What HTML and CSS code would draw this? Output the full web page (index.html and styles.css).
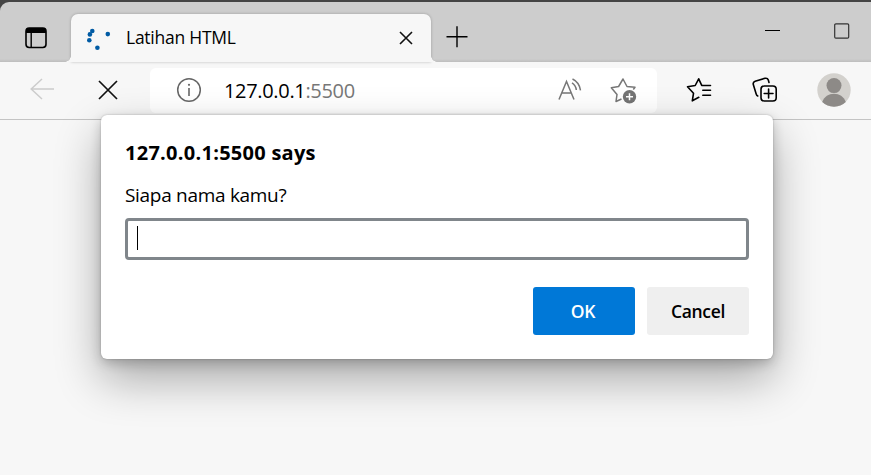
FILE: index.html
```html
<!DOCTYPE html>
<html lang="id">
<head>
<meta charset="utf-8">
<title>Latihan HTML</title>
<link rel="stylesheet" href="styles.css">
</head>
<body>
<div class="window">
  <header class="titlebar">
    <svg class="tab-actions" width="22" height="22" viewBox="0 0 22 22"><rect x="1" y="1" width="20" height="19.5" rx="3.2" fill="none" stroke="#000" stroke-width="1.6"/><path d="M1 6V4a3 3 0 0 1 3-3h14a3 3 0 0 1 3 3v2z"/><path d="M6.2 6v14" stroke="#000" stroke-width="1.4"/></svg>
    <div class="tab">
      <svg class="spinner" width="26" height="24" viewBox="0 0 26 24" fill="#005ba4"><circle cx="6.3" cy="4" r="2.3"/><circle cx="3.9" cy="7.4" r="2.3"/><circle cx="3.3" cy="13.2" r="2.3"/><circle cx="21.8" cy="7.1" r="2.3"/><circle cx="11.4" cy="20.8" r="2.3"/></svg>
      <span class="tab-title">Latihan HTML</span>
      <svg class="tab-close" width="14" height="14" viewBox="0 0 14 14" stroke="#111" stroke-width="1.6"><path d="M1 1l12 12M13 1L1 13"/></svg>
    </div>
    <svg class="new-tab" width="22" height="22" viewBox="0 0 22 22" stroke="#000" stroke-width="1.4"><path d="M.5 10.7h21M11 .3v21"/></svg>
    <svg class="minimize" width="15" height="16" viewBox="0 0 15 16"><path d="M0 7.5h15" stroke="#000"/></svg>
    <svg class="maximize" width="16" height="16" viewBox="0 0 16 16"><rect x=".7" y=".8" width="14" height="14.4" rx="1.2" fill="none" stroke="#333" stroke-width="1.2"/></svg>
  </header>
  <nav class="toolbar">
    <svg class="back" width="25" height="22" viewBox="0 0 25 22" fill="none" stroke="#ccc" stroke-width="1.5"><path d="M12 1L1.2 11 12 21M1.2 11H24"/></svg>
    <svg class="stop" width="20" height="20" viewBox="0 0 20 20" stroke="#111" stroke-width="1.7"><path d="M1 1l18 18M19 1L1 19"/></svg>
    <div class="address">
      <svg class="info" width="26" height="26" viewBox="0 0 26 26"><circle cx="13" cy="13" r="11.3" fill="none" stroke="#666" stroke-width="1.5"/><path d="M13 11v8" stroke="#666" stroke-width="1.6"/><circle cx="13" cy="7.8" r="1.1" fill="#666"/></svg>
      <span class="url">127.0.0.1<span class="port">:5500</span></span>
      <svg class="read" width="25" height="23" viewBox="0 0 25 23" fill="none" stroke="#777" stroke-width="1.5"><path d="M1 21.5L8.5 3.5 16 21.5M3.8 15h9.4M14 4.8q3.8 2.2 4.3 7.2M14.5 1q6.8 3.3 8 11.3"/></svg>
      <svg class="favorite" width="28" height="28" viewBox="0 0 28 28"><path d="M11.5 22L6 24.5l1-7L1.3 10.7l7.3-1.2L13 2l4 7.5 8 .8-1.7 2.2" fill="none" stroke="#777" stroke-width="1.5" stroke-linejoin="round"/><circle cx="19.5" cy="19.8" r="6.7" fill="#747474"/><path d="M16 19.8h7M19.5 16.3v7" stroke="#fff" stroke-width="1.5"/></svg>
    </div>
    <svg class="favorites" width="26" height="26" viewBox="0 0 26 26" fill="none" stroke="#000" stroke-width="1.6" stroke-linecap="round" stroke-linejoin="round"><path d="M12.8 20.3L6.3 23.8l1.2-7.5L1.5 9.8 9.2 8.5 12.7 1.8l3 6.5M16.5 8.5h8M16.8 13.3h7.7M16.8 18.2h7.7"/></svg>
    <svg class="collections" width="26" height="26" viewBox="0 0 26 26" fill="none" stroke="#000" stroke-width="1.6" stroke-linecap="round" stroke-linejoin="round"><path d="M5.7 19C4.8 18.5 4.4 17.7 4.1 16.7L1.3 7.6Q.7 5 3.1 4.2L13 1.3Q15.6.8 16.3 3l.7 2.5"/><rect x="9" y="9" width="15.2" height="15" rx="3.3"/><path d="M12.2 16.5h8.8M16.6 12.1v8.8"/></svg>
    <svg class="profile" width="34" height="34" viewBox="0 0 34 34"><circle cx="17" cy="17" r="16.7" fill="#d3d1cd"/><circle cx="17" cy="12.6" r="7.5" fill="#8d8a87"/><path d="M5.2 29C7.5 23.5 11.5 20.8 17 20.8S26.5 23.5 28.8 29C22.5 35.2 11.5 35.2 5.2 29z" fill="#8d8a87"/></svg>
  </nav>
  <main class="page">
    <section class="dialog">
      <h1 class="origin">127.0.0.1:5500 says</h1>
      <p class="message">Siapa nama kamu?</p>
      <div class="field"><span class="caret"></span></div>
      <div class="actions"><button class="button primary">OK</button><button class="button">Cancel</button></div>
    </section>
  </main>
</div>
</body>
</html>
```
FILE: styles.css
```css
* { box-sizing: border-box; }
body { margin: 0; background: #3b3b3b; font-family: "Open Sans", "Noto Sans", sans-serif; color: #000; }
svg { display: block; flex: none; }
.window { width: 871px; height: 475px; border-top: 2px solid #444; background: #444; overflow: hidden; }
.titlebar { height: 60px; display: flex; align-items: flex-start; background: linear-gradient(#cdcdcd 57px, #bdbdbd 60px); border-top-left-radius: 9px; }
.tab-actions { margin: 25px 0 0 25px; }
.tab { position: relative; width: 360px; height: 48px; margin: 12px 0 0 24px; padding-left: 15px; display: flex; background: #f7f7f7; border-radius: 7px 7px 0 0; box-shadow: 0 0 3px rgba(0,0,0,.25); }
.tab::before, .tab::after { content: ""; position: absolute; bottom: 0; width: 6px; height: 6px; }
.tab::before { left: -6px; background: radial-gradient(circle at 0 0, transparent 5.5px, #f7f7f7 6px); }
.tab::after { right: -6px; background: radial-gradient(circle at 100% 0, transparent 5.5px, #f7f7f7 6px); }
.spinner { margin-top: 13px; }
.tab-title { width: 273px; margin: 10px 0 0 14px; font-size: 17.5px; line-height: 26px; letter-spacing: -.25px; white-space: nowrap; }
.tab-close { margin-top: 17px; }
.new-tab { margin: 24px 0 0 15px; }
.minimize { margin: 21px 0 0 297px; }
.maximize { margin: 21px 0 0 54px; }
.toolbar { height: 58px; display: flex; align-items: flex-start; background: #f7f7f7; border-bottom: 1px solid #c4c4c4; }
.back { margin: 16px 0 0 30px; }
.stop { margin: 18px 0 0 43px; }
.address { width: 507px; height: 45px; margin: 6px 0 0 32px; padding-left: 26px; display: flex; background: #fff; border-radius: 6px; }
.info { margin-top: 9px; }
.url { width: 334px; margin: 9px 0 0 22px; font-size: 20px; line-height: 27px; letter-spacing: -.33px; white-space: nowrap; }
.port { color: #777; }
.read { margin-top: 10px; }
.favorite { margin: 9px 0 0 27px; }
.favorites { margin: 15px 0 0 29px; }
.collections { margin: 15px 0 0 40px; }
.profile { margin: 11px 0 0 39px; }
.page { height: 355px; background: #f7f7f7; }
.dialog { position: relative; top: -5px; width: 672px; height: 244px; margin-left: 101px; padding: 24px; background: #fff; border-radius: 6px; box-shadow: 0 0 2px rgba(0,0,0,.25), 0 4px 12px rgba(0,0,0,.2), 0 20px 46px rgba(0,0,0,.32); }
.origin { height: 28px; margin: 0; font-size: 20px; line-height: 28px; font-weight: 700; letter-spacing: .27px; white-space: nowrap; }
.message { height: 28px; margin: 14px 0 9px; font-size: 19px; line-height: 28px; letter-spacing: -.3px; white-space: nowrap; }
.field { height: 42px; padding: 5px 9px; border: 3px solid #80868b; border-radius: 4px; }
.caret { display: block; width: 1px; height: 24px; background: #000; }
.actions { display: flex; justify-content: flex-end; gap: 12px; margin-top: 27px; }
.button { width: 102px; height: 48px; padding: 0; border: 0; border-radius: 3px; background: #efefef; color: #000; font: 600 17.5px/48px "Open Sans", "Noto Sans", sans-serif; letter-spacing: -.3px; }
.primary { padding-right: 2px; background: #0078d7; color: #fff; }
```
